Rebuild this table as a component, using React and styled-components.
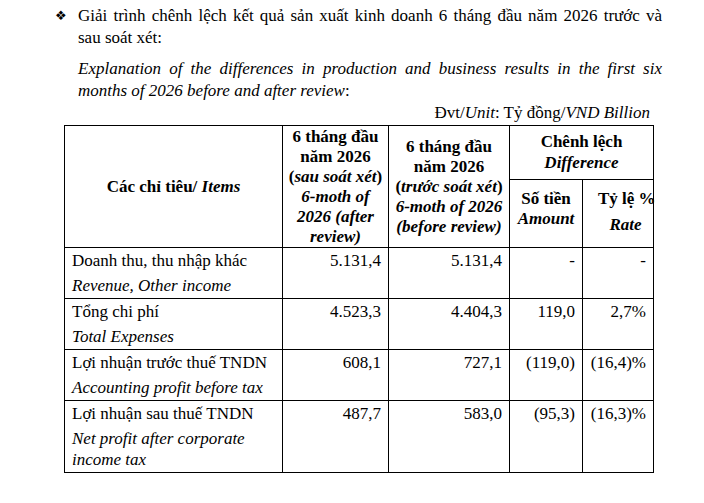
import React from 'react';
import styled, { createGlobalStyle } from 'styled-components';

const GlobalStyle = createGlobalStyle`
  body {
    margin: 0;
    background: #fff;
    color: #000;
    font-family: "Liberation Serif", "Times New Roman", serif;
  }
`;

const Page = styled.div`
  width: 704px;
  height: 503px;
  padding-top: 5px;
  box-sizing: border-box;
  font-size: 17px;
`;

const Heading = styled.div`
  display: flex;
  align-items: flex-start;
  padding-left: 55px;
`;

const Bullet = styled.span`
  width: 23px;
  font-family: "DejaVu Sans", sans-serif;
  font-size: 13px;
  line-height: 21px;
`;

const Paragraph = styled.div`
  width: 584px;
  margin-left: ${(p) => (p.$indent ? '78px' : '0')};
  margin-top: ${(p) => p.$gap || 0}px;
  font-style: ${(p) => (p.$italic ? 'italic' : 'normal')};
`;

const Line = styled.div`
  line-height: 22px;
  white-space: nowrap;
  text-align: ${(p) => (p.$justify ? 'justify' : 'left')};
  text-align-last: ${(p) => (p.$justify ? 'justify' : 'left')};
`;

const Upright = styled.span`
  font-style: normal;
`;

const Italic = styled.span`
  font-style: italic;
`;

const Unit = styled.div`
  width: 650px;
  text-align: right;
  line-height: 22px;
  margin-bottom: 1px;
`;

const Table = styled.table`
  margin-left: 64px;
  border-collapse: collapse;
  table-layout: fixed;
  width: 589px;
  font-size: 17px;
`;

const Th = styled.th`
  border: 1px solid #000;
  padding: ${(p) => p.$pad || '0'};
  font-weight: bold;
  line-height: ${(p) => p.$lh || 20}px;
  text-align: center;
  vertical-align: ${(p) => p.$valign || 'middle'};
  white-space: nowrap;
`;

const SubLine = styled.div`
  margin-top: ${(p) => p.$gap || 0}px;
`;

const Td = styled.td`
  border: 1px solid #000;
  padding: 2px 7px 2px 7px;
  vertical-align: top;
  text-align: ${(p) => (p.$num ? 'right' : 'left')};
  line-height: 22px;
`;

const VnLabel = styled.div`
  line-height: 22px;
`;

const EnLabel = styled.div`
  font-style: italic;
  line-height: 21px;
  margin-top: 3px;
`;

const rows = [
  { vn: 'Doanh thu, thu nhập khác', en: 'Revenue, Other income', after: '5.131,4', before: '5.131,4', amount: '-', rate: '-' },
  { vn: 'Tổng chi phí', en: 'Total Expenses', after: '4.523,3', before: '4.404,3', amount: '119,0', rate: '2,7%' },
  { vn: 'Lợi nhuận trước thuế TNDN', en: 'Accounting profit before tax', after: '608,1', before: '727,1', amount: '(119,0)', rate: '(16,4)%' },
  { vn: 'Lợi nhuận sau thuế TNDN', en: 'Net profit after corporate income tax', after: '487,7', before: '583,0', amount: '(95,3)', rate: '(16,3)%' },
];

export default function App() {
  return (
    <Page>
      <GlobalStyle />
      <Heading>
        <Bullet>❖</Bullet>
        <Paragraph>
          <Line $justify>Giải trình chênh lệch kết quả sản xuất kinh doanh 6 tháng đầu năm 2026 trước và</Line>
          <Line>sau soát xét:</Line>
        </Paragraph>
      </Heading>
      <Paragraph $indent $italic $gap={9}>
        <Line $justify>Explanation of the differences in production and business results in the first six</Line>
        <Line>months of 2026 before and after review<Upright>:</Upright></Line>
      </Paragraph>
      <Unit>
        Đvt/<Italic>Unit</Italic>: Tỷ đồng/<Italic>VND Billion</Italic>
      </Unit>
      <Table>
        <colgroup>
          <col style={{ width: 218 }} />
          <col style={{ width: 106 }} />
          <col style={{ width: 121 }} />
          <col style={{ width: 73 }} />
          <col style={{ width: 71 }} />
        </colgroup>
        <thead>
          <tr>
            <Th rowSpan={2}>
              Các chỉ tiêu/ <Italic>Items</Italic>
            </Th>
            <Th rowSpan={2} $pad="1px 0 0">
              6 tháng đầu<br />
              năm 2026<br />
              (<Italic>sau soát xét</Italic>)<br />
              <Italic>6-moth of</Italic><br />
              <Italic>2026 (after</Italic><br />
              <Italic>review)</Italic>
            </Th>
            <Th rowSpan={2}>
              6 tháng đầu<br />
              năm 2026<br />
              (<Italic>trước soát xét</Italic>)<br />
              <Italic>6-moth of 2026</Italic><br />
              <Italic>(before review)</Italic>
            </Th>
            <Th colSpan={2} $lh={21} $pad="0 0 1px">
              Chênh lệch<br />
              <Italic>Difference</Italic>
            </Th>
          </tr>
          <tr>
            <Th $valign="top" $pad="9px 0 0">
              <SubLine>Số tiền</SubLine>
              <SubLine><Italic>Amount</Italic></SubLine>
            </Th>
            <Th $valign="top" $pad="9px 0 0 15px">
              <SubLine>Tỷ lệ %</SubLine>
              <SubLine $gap={6}><Italic>Rate</Italic></SubLine>
            </Th>
          </tr>
        </thead>
        <tbody>
          {rows.map((r) => (
            <tr key={r.vn}>
              <Td>
                <VnLabel>{r.vn}</VnLabel>
                <EnLabel>{r.en}</EnLabel>
              </Td>
              <Td $num>{r.after}</Td>
              <Td $num>{r.before}</Td>
              <Td $num>{r.amount}</Td>
              <Td $num>{r.rate}</Td>
            </tr>
          ))}
        </tbody>
      </Table>
    </Page>
  );
}
